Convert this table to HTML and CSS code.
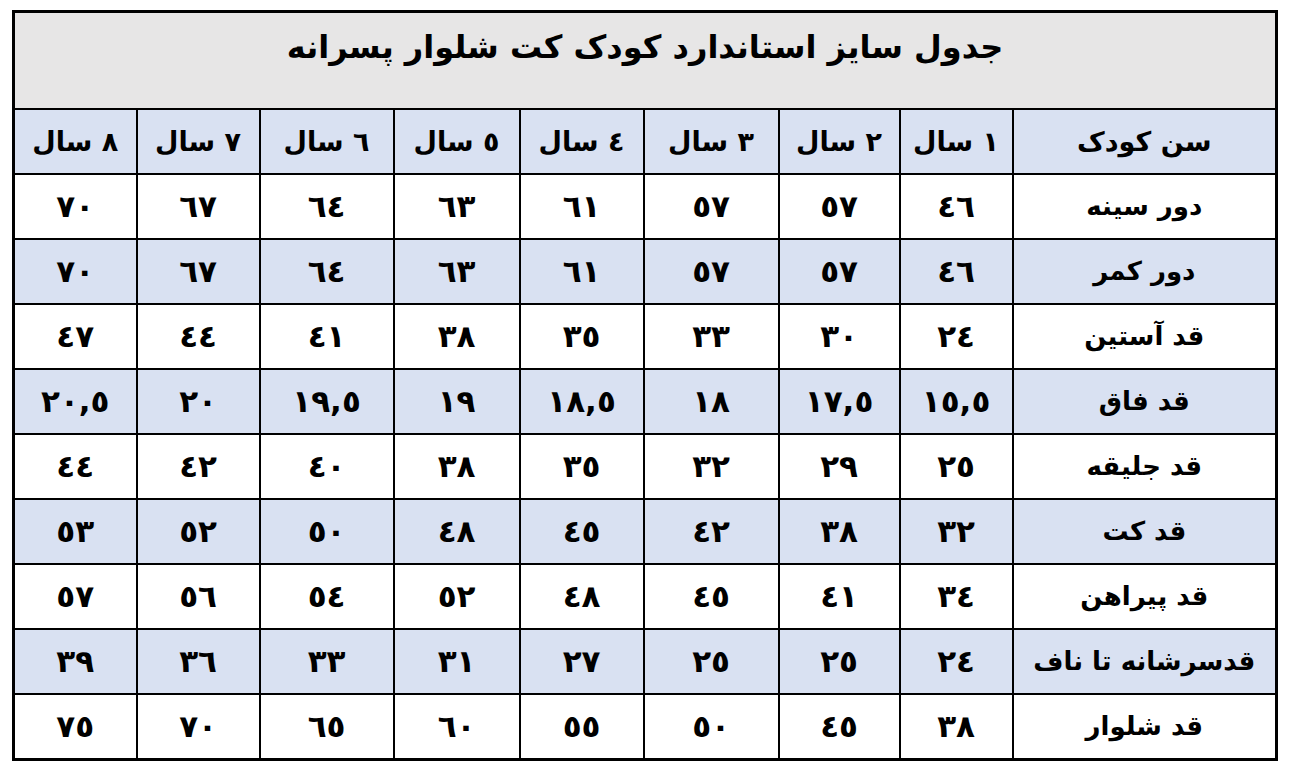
FILE: index.html
```html
<!DOCTYPE html>
<html lang="fa">
<head>
<meta charset="utf-8">
<title>جدول سایز استاندارد کودک کت شلوار پسرانه</title>
<link rel="stylesheet" href="styles.css">
</head>
<body>
<table class="size-table" dir="rtl">
  <colgroup>
    <col class="c-label">
    <col class="c1"><col class="c2"><col class="c3"><col class="c4">
    <col class="c5"><col class="c6"><col class="c7"><col class="c8">
  </colgroup>
  <thead>
    <tr class="title-row"><th colspan="9" class="title">جدول سایز استاندارد کودک کت شلوار پسرانه</th></tr>
    <tr class="blue"><th>سن کودک</th><th>١ سال</th><th>٢ سال</th><th>٣ سال</th><th>٤ سال</th><th>٥ سال</th><th>٦ سال</th><th>٧ سال</th><th>٨ سال</th></tr>
  </thead>
  <tbody>
    <tr><td class="label">دور سینه</td><td>٤٦</td><td>٥٧</td><td>٥٧</td><td>٦١</td><td>٦٣</td><td>٦٤</td><td>٦٧</td><td>٧٠</td></tr>
    <tr class="blue"><td class="label">دور کمر</td><td>٤٦</td><td>٥٧</td><td>٥٧</td><td>٦١</td><td>٦٣</td><td>٦٤</td><td>٦٧</td><td>٧٠</td></tr>
    <tr><td class="label">قد آستین</td><td>٢٤</td><td>٣٠</td><td>٣٣</td><td>٣٥</td><td>٣٨</td><td>٤١</td><td>٤٤</td><td>٤٧</td></tr>
    <tr class="blue"><td class="label">قد فاق</td><td>١٥,٥</td><td>١٧,٥</td><td>١٨</td><td>١٨,٥</td><td>١٩</td><td>١٩,٥</td><td>٢٠</td><td>٢٠,٥</td></tr>
    <tr><td class="label">قد جلیقه</td><td>٢٥</td><td>٢٩</td><td>٣٢</td><td>٣٥</td><td>٣٨</td><td>٤٠</td><td>٤٢</td><td>٤٤</td></tr>
    <tr class="blue"><td class="label">قد کت</td><td>٣٢</td><td>٣٨</td><td>٤٢</td><td>٤٥</td><td>٤٨</td><td>٥٠</td><td>٥٢</td><td>٥٣</td></tr>
    <tr><td class="label">قد پیراهن</td><td>٣٤</td><td>٤١</td><td>٤٥</td><td>٤٨</td><td>٥٢</td><td>٥٤</td><td>٥٦</td><td>٥٧</td></tr>
    <tr class="blue"><td class="label">قدسرشانه تا ناف</td><td>٢٤</td><td>٢٥</td><td>٢٥</td><td>٢٧</td><td>٣١</td><td>٣٣</td><td>٣٦</td><td>٣٩</td></tr>
    <tr><td class="label">قد شلوار</td><td>٣٨</td><td>٤٥</td><td>٥٠</td><td>٥٥</td><td>٦٠</td><td>٦٥</td><td>٧٠</td><td>٧٥</td></tr>
  </tbody>
</table>
</body>
</html>
```
FILE: styles.css
```css
html, body {
  margin: 0;
  padding: 0;
  background: #ffffff;
}

body {
  padding: 10px 0 0 12px;
  font-family: "DejaVu Sans", "Noto Sans", sans-serif;
  color: #000;
}

.size-table {
  border-collapse: collapse;
  table-layout: fixed;
  width: 1264px;
  border: 3px solid #000;
}

.c-label { width: 264px; }
.c1 { width: 113px; }
.c2 { width: 121px; }
.c3 { width: 135px; }
.c4 { width: 124px; }
.c5 { width: 126px; }
.c6 { width: 134px; }
.c7 { width: 123px; }
.c8 { width: 123px; }

.size-table th,
.size-table td {
  border: 2px solid #000;
  text-align: center;
  vertical-align: middle;
  padding: 0;
  height: 63px;
  font-size: 31px;
  font-weight: bold;
  line-height: 1;
}

.size-table thead th {
  font-weight: bold;
  font-size: 27px;
}

.size-table .label {
  font-weight: bold;
  font-size: 26px;
}

.size-table th.title {
  background: #e7e6e6;
  height: 97px;
  vertical-align: top;
  padding-top: 18px;
  font-size: 32px;
  font-weight: bold;
  box-sizing: border-box;
}

.blue th,
.blue td {
  background: #d9e1f2;
}
```
